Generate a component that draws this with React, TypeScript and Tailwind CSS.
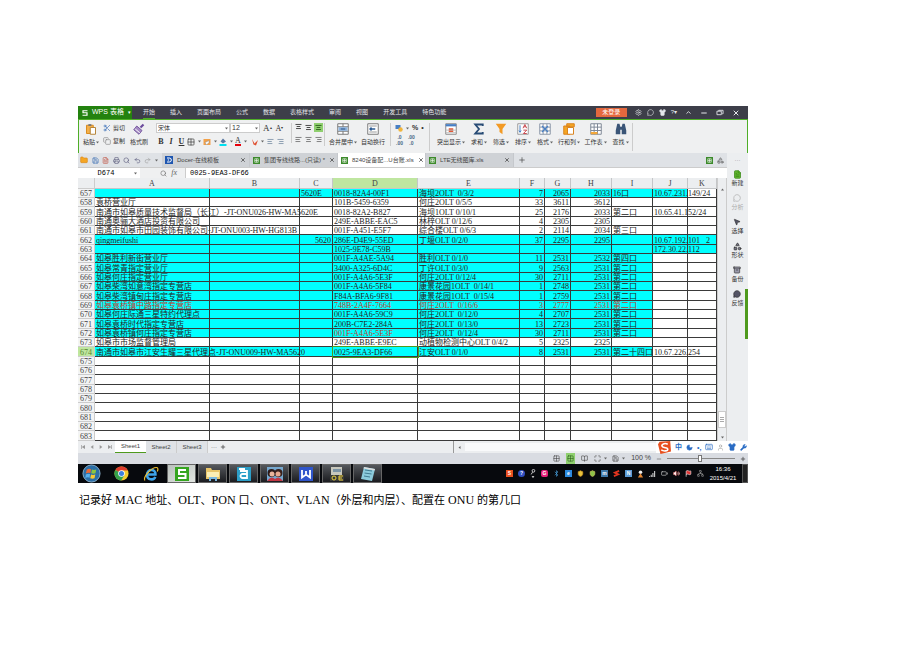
import type { ReactNode } from 'react'
import {
  AlignCenter, AlignLeft, AlignRight, Battery, Bluetooth, ChevronUp, Copy, FileText, Folder, Grid2x2, Minus,
  Plus, Printer, Redo2, Save, Scissors, Search, Settings, Shirt, Undo2, Wrench, X, Moon, Keyboard, User,
  BookOpen, Maximize, MessageCircle, Shapes, Archive, MousePointer2, Network, Volume2, Flag, Shield,
} from 'lucide-react'

type Row = {
  n: number
  fill?: number
  red?: 'row' | 'mac'
  cells: string[]
}

const columns = ['A', 'B', 'C', 'D', 'E', 'F', 'G', 'H', 'I', 'J', 'K']
const columnWidths = [
  'w-[115px]', 'w-[90px]', 'w-[33px]', 'w-[85px]', 'w-[102px]', 'w-[25px]', 'w-[26px]', 'w-[41px]', 'w-[41px]',
  'w-[35px]', '',
]

// fill = how many columns are cyan, counted from A
const rows: Row[] = [
  { n: 657, fill: 10, cells: ['', '', '5620E', '0018-82A4-00F1', '海坝2OLT  0/3/2', '7', '2065', '2033', '16口', '10.67.231.149/24'] },
  { n: 658, cells: ['袁桥营业厅', '', '', '101B-5459-6359', '何庄2OLT 0/5/5', '33', '3611', '3612'] },
  { n: 659, cells: ['南通市如皋质量技术监督局（长江）-JT-ONU026-HW-MA5620E', '', '', '0018-82A2-B827', '海坝1OLT 0/10/1', '25', '2176', '2033', '第二口', '10.65.41.152/24'] },
  { n: 660, cells: ['南通奥骊大酒店投资有限公司', '', '', '249E-ABBE-EAC5', '林梓OLT 0/12/6', '4', '2305', '2305'] },
  { n: 661, cells: ['南通市如皋市田园装饰有限公司-JT-ONU003-HW-HG813B', '', '', '001F-A451-E5F7', '综合楼OLT 0/6/3', '2', '2114', '2034', '第三口'] },
  { n: 662, fill: 11, cells: ['qingmeifushi', '', '5620', '286E-D4E9-55ED', '丁堰OLT 0/2/0', '37', '2295', '2295', '', '10.67.192.101   2'] },
  { n: 663, fill: 11, cells: ['', '', '', '1025-9E78-C59B', '', '', '', '', '', '172.30.22.112'] },
  { n: 664, fill: 9, cells: ['如皋胜利新街营业厅', '', '', '001F-A4AE-5A94', '胜利OLT 0/1/0', '11', '2531', '2532', '第四口'] },
  { n: 665, fill: 9, cells: ['如皋常青指定营业厅', '', '', '3400-A325-6D4C', '丁许OLT 0/3/0', '9', '2563', '2531', '第二口'] },
  { n: 666, fill: 9, cells: ['如皋何庄指定营业厅', '', '', '001F-A4A6-5E3F', '何庄2OLT 0/12/4', '30', '2711', '2531', '第二口'] },
  { n: 667, fill: 9, cells: ['如皋柴湾如意湾指定专营店', '', '', '001F-A4A6-5F84', '康景花园1OLT  0/14/1', '1', '2748', '2531', '第二口'] },
  { n: 668, fill: 9, cells: ['如皋柴湾镇甸庄指定专营店', '', '', 'F84A-BFA6-9F81', '康景花园1OLT  0/15/4', '1', '2759', '2531', '第二口'] },
  { n: 669, fill: 9, red: 'row', cells: ['如皋袁桥镇中路指定专营店', '', '', '748B-2A4F-7664', '何庄2OLT  0/16/6', '3', '2777', '2531', '第二口'] },
  { n: 670, fill: 9, cells: ['如皋何庄际通三星特约代理点', '', '', '001F-A4A6-59C9', '何庄2OLT  0/12/0', '4', '2707', '2531', '第二口'] },
  { n: 671, fill: 9, cells: ['如皋袁桥时代指定专营店', '', '', '200B-C7E2-284A', '何庄2OLT  0/13/0', '13', '2723', '2531', '第二口'] },
  { n: 672, fill: 9, red: 'mac', cells: ['如皋袁桥镇何庄指定专营店', '', '', '001F-A4A6-5E3F', '何庄2OLT  0/12/4', '30', '2711', '2531', '第二口'] },
  { n: 673, cells: ['如皋市市场监督管理局', '', '', '249E-ABBE-E9EC', '动植物检测中心OLT 0/4/2', '5', '2325', '2325'] },
  { n: 674, fill: 9, cells: ['南通市如皋市江安生耀三星代理点-JT-ONU009-HW-MA5620', '', '', '0025-9EA3-DF66', '江安OLT 0/1/0', '8', '2531', '2531', '第二十四口', '10.67.226.254'] },
  ...[675, 676, 677, 678, 679, 680, 681, 682, 683].map((n) => ({ n, cells: [] })),
]

// Latin runs and Chinese runs get their own size
function Mixed({ text, latin, cjk }: { text: string; latin: string; cjk: string }) {
  return (
    <>
      {text.split(/([\x20-\x7e]+)/).filter(Boolean).map((part, i) => (
        <span key={i} className={/^[\x20-\x7e]/.test(part) ? latin : cjk}>{part}</span>
      ))}
    </>
  )
}

function TitleBar() {
  const menus = ['开始', '插入', '页面布局', '公式', '数据', '表格样式', '审阅', '视图', '开发工具', '特色功能']
  return (
    <header className="flex h-[13px] items-stretch bg-[#3d3e49] text-[6px] text-gray-200">
      <button className="flex w-[54px] items-center gap-1 bg-[#23820f] pl-1 text-[7px] text-white">
        <svg viewBox="0 0 12 12" className="h-2 w-[6px]" fill="none" stroke="white" strokeWidth="2.4">
          <path d="M11 1.5H2v4h8v5H1" />
        </svg>
        <span className="whitespace-nowrap">WPS 表格</span>
        <span className="text-[5px]">▾</span>
      </button>
      <nav className="flex flex-1 items-center gap-[15px] pl-[11px]">
        {menus.map((m, i) => (
          <button key={m} className={i === 0 ? 'h-full whitespace-nowrap border-b border-[#4fae28]' : 'whitespace-nowrap'}>{m}</button>
        ))}
      </nav>
      <div className="flex items-center pr-2">
        <button className="mr-2 h-[9px] w-[31px] bg-[#e4683e] leading-[9px] text-white">未登录</button>
        <div className="mr-2 flex items-center gap-[5px]">
          <Settings size={7} />
          <MessageCircle size={7} />
          <Shirt size={7} fill="currentColor" />
          <span>?▾</span>
        </div>
        <div className="flex items-center gap-2">
          <ChevronUp size={7} strokeWidth={3} />
          <Minus size={8} strokeWidth={3} />
          <svg viewBox="0 0 8 8" className="h-[7px] w-2" fill="none" stroke="currentColor"><path d="M2.5 2.5v-1h5v4h-1M.5 2.5h5v4h-5z" /></svg>
          <X size={8} strokeWidth={3} />
        </div>
      </div>
    </header>
  )
}

function BigTool({ label, width, arrow, children }: { label: string; width: string; arrow?: boolean; children: ReactNode }) {
  return (
    <button className={`flex shrink-0 flex-col items-center ${width}`}>
      <svg viewBox="0 0 16 16" className="h-3 w-3" fill="none" strokeWidth="1.3">{children}</svg>
      <span className="mt-[3px] flex h-2 items-center gap-px whitespace-nowrap leading-[8px]">
        {label}
        {arrow && <Arrow />}
      </span>
    </button>
  )
}

function Arrow() {
  return <svg viewBox="0 0 6 6" className="h-[3px] w-[3px] shrink-0" fill="#666"><path d="M0 1h6L3 5z" /></svg>
}

function Ribbon() {
  return (
    <div className="flex h-[34px] items-start overflow-hidden border-x border-t border-[#4fae28] bg-[#eff0f1] pt-[3px] text-[6px] text-[#333]">
      <div className="flex w-[75px] shrink-0">
        <BigTool label="粘贴" width="w-[24px]" arrow>
          <path d="M2 3h9v11H2z" fill="#f4b04a" stroke="#d98a1c" />
          <path d="M4.500 1.500h4v2.500h-4z" fill="#777" />
          <path d="M7 6h7v9H7z" fill="#fff" stroke="#b58438" />
        </BigTool>
        <div className="flex w-[25px] flex-col gap-[5px] pt-px">
          <button className="flex h-2 items-center gap-[2px] whitespace-nowrap leading-[8px]"><Scissors size={8} color="#3c6fb8" />剪切</button>
          <button className="flex h-2 items-center gap-[2px] whitespace-nowrap leading-[8px]"><Copy size={8} color="#888" />复制</button>
        </div>
        <BigTool label="格式刷" width="w-[22px]">
          <path d="M9 5l4-4 2 2-4 4z" fill="#6b4a9c" />
          <path d="M5 4l7 6-4 5-7-6z" fill="#a68cc4" stroke="#75579d" />
          <path d="M3 8l6 5" stroke="#fff" />
        </BigTool>
      </div>

      <div className="w-[137px] shrink-0 px-[2px]">
        <div className="flex h-[10px] items-center">
          <select aria-label="字体" className="h-[10px] w-[74px] appearance-none border border-[#ccc] bg-white px-px text-[6px] leading-[8px]" defaultValue="宋体">
            <option>宋体</option>
          </select>
          <span className="-ml-[5px] mr-[2px]"><Arrow /></span>
          <select aria-label="字号" className="h-[10px] w-[30px] appearance-none border border-[#ccc] bg-white px-px text-[7px] leading-[8px]" defaultValue="12">
            <option>12</option>
          </select>
          <span className="-ml-[5px] mr-[5px]"><Arrow /></span>
          <button className="mr-[4px] font-['Liberation_Serif',serif] text-[9px] leading-[9px]">A<sup className="text-[4px]">▴</sup></button>
          <button className="font-['Liberation_Serif',serif] text-[8px] leading-[9px]">A<sup className="text-[4px]">▾</sup></button>
        </div>
        <div className="mt-1 flex h-[9px] items-center font-['Liberation_Serif',serif] text-[8px] leading-[9px]">
          <button className="w-[10px] font-bold">B</button>
          <button className="w-[10px] font-bold italic">I</button>
          <button className="w-[11px] font-bold underline">U</button>
          <button className="flex w-4 items-center gap-[3px]"><Grid2x2 size={8} strokeWidth={2} className="shrink-0" /><Arrow /></button>
          <button className="flex w-4 items-center gap-[3px]">
            <svg viewBox="0 0 16 16" className="h-2 w-2"><path d="M1 2h14v12H1z" fill="#f2a14a" /><path d="M4 9l8-4v4l-5 5z" fill="#fff" stroke="#888" /></svg>
            <Arrow />
          </button>
          <button className="flex w-4 items-center gap-[3px]">
            <svg viewBox="0 0 16 16" className="h-2 w-2"><path d="M8 1l6 6-6 4-5-4z" fill="#5877a0" /><path d="M1 12h14v4H1z" fill="#00dff0" /></svg>
            <Arrow />
          </button>
          <button className="flex w-4 items-center gap-[3px]"><span className="border-b-2 border-red-600 leading-[7px]">A</span><Arrow /></button>
          <button className="flex w-4 items-center gap-[2px]">
            <svg viewBox="0 0 16 16" className="h-2 w-2"><path d="M2 2l5 9 7-7-4 11-5-2z" fill="#df5132" /></svg>
            <Arrow />
          </button>
          <button className="mr-[3px]"><AlignLeft size={7} color="#4a6786" /></button>
          <button><AlignRight size={7} color="#4a6786" /></button>
        </div>
      </div>

      <div className="grid w-[33px] shrink-0 grid-cols-3 place-items-center gap-y-1 border-l border-[#ccc] px-px">
        <button className="flex h-[9px] w-[9px] items-start justify-center"><AlignCenter size={7} strokeWidth={3} /></button>
        <button className="flex h-[9px] w-[9px] items-center justify-center"><AlignCenter size={7} strokeWidth={3} /></button>
        <button className="flex h-[9px] w-[9px] items-center justify-center bg-[#8fcf6f]"><AlignCenter size={7} strokeWidth={3} color="#285b18" /></button>
        <button><AlignLeft size={7} /></button>
        <button><AlignCenter size={7} /></button>
        <button><AlignRight size={7} /></button>
      </div>

      <div className="flex w-[66px] shrink-0 justify-between border-l border-[#ccc] px-1">
        <BigTool label="合并居中" width="w-[28px]" arrow>
          <path d="M1 1h14v14H1zM1 5h14M1 11h14M8 1v4M8 11v4" stroke="#777" fill="#fff" />
          <path d="M2 5.500h12v5H2z" fill="#8fb4dc" /><path d="M5 8h6" stroke="#244d83" />
        </BigTool>
        <BigTool label="自动换行" width="w-[26px]">
          <path d="M1 1h14v14H1z" stroke="#777" fill="#fff" />
          <path d="M3 4h10M3 12h10" stroke="#999" /><path d="M4 8h7M6 6L4 8l2 2" stroke="#2c5b92" strokeWidth="1.800" />
        </BigTool>
      </div>

      <div className="w-[39px] shrink-0 border-l border-[#ccc] pl-1 text-[7px]">
        <div className="flex h-[10px] items-center gap-[3px]">
          <svg viewBox="0 0 16 16" className="h-2 w-2"><path d="M1 2h10v8H1z" fill="#477fc4" /><circle cx="11" cy="11" r="4.500" fill="#f1b53c" /></svg>
          <Arrow />
          <span className="font-bold">%</span>
          <span className="font-bold">•</span>
        </div>
        <div className="mt-px flex gap-[5px] pl-px text-[5px] font-bold leading-[6px] text-[#4a6786]">
          <button className="flex flex-col"><span>.0</span><span>.00</span></button>
          <button className="flex flex-col"><span>.00</span><span>.0</span></button>
        </div>
      </div>

      <div className="flex border-l border-[#ccc] pl-[4px]">
        <BigTool label="突出显示" width="w-[34px]" arrow>
          <path d="M1 1h14v14H1z" fill="#fff" stroke="#888" /><path d="M1 3h14" stroke="#477fc4" strokeWidth="3" />
          <path d="M5 7h6v5H5z" fill="#e15836" /><path d="M1 9.500h14M1 13h14" stroke="#bbb" />
        </BigTool>
        <BigTool label="求和" width="w-[22px]" arrow>
          <path d="M13 4V2H3l5 6-5 6h10v-2" stroke="#274b75" strokeWidth="2.400" />
        </BigTool>
        <BigTool label="筛选" width="w-[22px]" arrow>
          <path d="M1 1h14l-5 7v7l-4-3V8z" fill="#f29a25" />
        </BigTool>
        <BigTool label="排序" width="w-[22px]" arrow>
          <path d="M1 1h14v14H1z" stroke="#999" fill="#fff" /><path d="M4 3v9M2.500 10L4 12.500 5.500 10" stroke="#477fc4" />
          <path d="M8 7l2.500-5L13 7M9 5h3M8.500 9.500H13L8.500 14H13" stroke="#c9484e" />
        </BigTool>
        <BigTool label="格式" width="w-[22px]" arrow>
          <path d="M1 1h14v14H1zM1 5.500h14M1 10.500h14M5.500 1v14M10.500 1v14" stroke="#8a96a8" fill="#fff" />
          <path d="M4 4l8 8M12 4l-8 8" stroke="#477fc4" strokeWidth="1.600" />
        </BigTool>
        <BigTool label="行和列" width="w-[26px]" arrow>
          <path d="M1 4h8v11H1zM5 1h10v4H5z" fill="#f5a623" stroke="#d9831c" /><path d="M6 6h8v9H6z" fill="#fff" stroke="#d9831c" />
        </BigTool>
        <BigTool label="工作表" width="w-[27px]" arrow>
          <path d="M1 1h14v14H1zM1 5.500h14M1 10h14M5.500 1v14M10 1v14" stroke="#7d8795" fill="#fff" />
          <path d="M1 12h9v3H1z" fill="#f4a83a" />
        </BigTool>
        <BigTool label="查找" width="w-[23px]" arrow>
          <path d="M3 1h3l1 4h2l1-4h3l2 9v5H9V9H7v6H1v-5z" fill="#3a5577" />
        </BigTool>
        <span className="h-[28px] w-px bg-[#ccc]" />
      </div>
    </div>
  )
}

function SheetIcon() {
  return (
    <svg viewBox="0 0 12 12" className="h-[7px] w-[7px] shrink-0">
      <path d="M0 0h12v12H0z" fill="#3c8a2b" /><path d="M3 3h6v6H3zM6 3v6M3 6h6" fill="none" stroke="#fff" />
    </svg>
  )
}

function FileTabs() {
  const tabs = ['Docer-在线模板', '集团专线线路...(只读) *', '8240设备配...U台账.xls', 'LTE无线图库.xls']
  return (
    <div className="flex h-[14px] items-stretch bg-[#dfe2e6] text-[6px] text-[#444]">
      <div className="flex w-[84px] shrink-0 items-center justify-between pl-[2px] pr-1">
        <Folder size={8} fill="#f5a623" color="#d98a1c" />
        <Save size={7} color="#2f66b0" />
        <FileText size={7} color="#c04b3a" />
        <Printer size={7} color="#557" />
        <Search size={7} color="#557" />
        <Undo2 size={7} color="#557" />
        <Redo2 size={7} color="#999" />
        <Arrow />
      </div>
      {tabs.map((t, i) => (
        <div key={t} className={`flex w-[88px] shrink-0 items-center gap-1 border-r border-[#c5c8cc] px-[3px] ${i === 2 ? 'bg-white' : 'bg-[#cfd2d6]'}`}>
          {i === 0 ? (
            <svg viewBox="0 0 12 12" className="h-2 w-2 shrink-0"><path d="M0 0h12v12H0z" fill="#1e56b0" /><path d="M3 3h3.500a3 3 0 010 6H3M5 5v2" fill="none" stroke="#fff" strokeWidth="1.500" /></svg>
          ) : <SheetIcon />}
          <button className="flex-1 whitespace-nowrap text-left">{t}</button>
          <button aria-label="关闭"><X size={6} strokeWidth={3} /></button>
        </div>
      ))}
      <button aria-label="新建标签" className="ml-1"><Plus size={8} /></button>
      <div className="ml-auto flex items-center gap-1 pr-[3px]">
        <SheetIcon />
        <Shapes size={7} />
      </div>
    </div>
  )
}

function FormulaBar() {
  return (
    <div className="flex h-[11px] items-stretch border-t border-[#ccc] bg-[#eff0f1] font-['Liberation_Mono','Noto_Sans_CJK_SC',monospace] text-[7px]">
      <input aria-label="名称框" defaultValue="D674" className="w-[56px] bg-white text-center" />
      <span className="flex w-[6px] items-center bg-white"><Arrow /></span>
      <div className="flex w-[46px] items-center justify-end gap-1 border-r border-[#ccc] pr-2 text-[#666]">
        <Search size={7} />
        <span className="font-['Liberation_Serif',serif] text-[8px] italic">fx</span>
      </div>
      <input aria-label="编辑栏" defaultValue="0025-9EA3-DF66" className="min-w-0 flex-1 bg-white pl-1" />
    </div>
  )
}

function Grid() {
  return (
    <table className="w-full table-fixed border-separate border-spacing-0 bg-white font-['Liberation_Serif','Noto_Sans_CJK_SC',serif] text-[8px] leading-[7px] text-[#222]">
      <thead>
        <tr className="h-[11px] bg-[#eceef0] text-[#444]">
          <th className="w-[17px] border-b border-r border-[#ccc] p-0" />
          {columns.map((c, i) => (
            <th key={c} className={`border-b border-r border-[#c4c6c8] p-0 font-normal ${columnWidths[i]} ${c === 'D' ? 'bg-[#bfe6a0]' : ''}`}>{c}</th>
          ))}
        </tr>
      </thead>
      <tbody>
        {rows.map((row) => (
          <tr key={row.n} className={row.n % 3 === 2 ? 'h-[10px]' : 'h-[9px]'}>
            <th className={`border-b border-r border-[#ccc] p-0 pt-px text-center font-normal ${row.n === 674 ? 'bg-[#bfe6a0] text-[#5a8a30]' : 'bg-[#f3f4f5] text-[#444]'}`}>
              {row.n}
            </th>
            {columns.map((c, i) => {
              const text = row.cells[i] ?? ''
              const right = (i >= 5 && i <= 7) || text === '5620'
              const red = row.red === 'row' || (row.red === 'mac' && i === 3)
              const active = row.n === 674 && i === 3
              return (
                <td
                  key={c}
                  className={`whitespace-pre border-b border-r border-[#3a3a3a] px-px pb-0 pt-px ${right ? 'text-right' : 'text-left'} ${i < (row.fill ?? 0) ? 'bg-[#00ffff]' : ''} ${red ? 'text-[#c0392b]' : ''} ${active ? 'outline outline-[#4f9a1e]' : ''}`}
                >
                  {text}
                </td>
              )
            })}
          </tr>
        ))}
      </tbody>
    </table>
  )
}

function VerticalScroll() {
  return (
    <div className="flex w-[10px] shrink-0 flex-col items-center justify-between border-x border-[#ccc] bg-[#eceef0] py-[2px]">
      <button aria-label="上" className="mt-[8px] rotate-180"><Arrow /></button>
      <div className="mt-auto mb-2 flex h-[17px] w-2 flex-col items-center justify-center gap-px border border-[#ccc] bg-white">
        <span className="h-px w-1 bg-[#aaa]" />
        <span className="h-px w-1 bg-[#aaa]" />
        <span className="h-px w-1 bg-[#aaa]" />
      </div>
      <button aria-label="下"><Arrow /></button>
    </div>
  )
}

function SidePanel() {
  const items = [
    { label: '新建', icon: <FileText size={9} fill="#62b52f" color="#3b8a18" /> },
    { label: '分析', icon: <MessageCircle size={8} />, off: true },
    { label: '选择', icon: <MousePointer2 size={8} fill="#556" /> },
    { label: '形状', icon: <Shapes size={9} fill="#778" /> },
    { label: '备份', icon: <Archive size={8} fill="#99a" /> },
    { label: '反馈', icon: <MessageCircle size={8} fill="#556" /> },
  ]
  return (
    <aside className="relative flex w-[21px] shrink-0 flex-col items-center bg-[#eceef0] text-[6px] text-[#333]">
      <div className="h-[16px] leading-[14px] text-[#888]">···</div>
      {items.map((it) => (
        <button key={it.label} className={`flex h-6 flex-col items-center ${it.off ? 'text-[#aaa]' : ''}`}>
          <span className="flex h-[10px] items-center">{it.icon}</span>
          <span className="leading-[9px]">{it.label}</span>
        </button>
      ))}
      <span className="absolute right-0 top-[136px] h-[50px] w-[3px] bg-[#4f9a1e]" />
    </aside>
  )
}

function SogouBar() {
  return (
    <div className="absolute top-0 right-0 flex h-3 w-[92px] items-center gap-1 bg-white pl-[2px] text-[#2a6cc4]">
      <svg viewBox="0 0 16 16" className="h-[13px] w-[13px] shrink-0">
        <path d="M2 1l13-1 1 13-13 3L0 4z" fill="#e8501f" />
        <path d="M12 4C8 2 4 4 5 6.500s7 1 7 3.500-5 3-8 1" fill="none" stroke="#fff" strokeWidth="2" />
      </svg>
      <span className="text-[7px] font-bold">中</span>
      <Moon size={7} fill="currentColor" />
      <span className="text-[7px] font-bold leading-[7px]">•,</span>
      <Keyboard size={8} />
      <User size={7} color="#999" />
      <Shirt size={8} fill="currentColor" />
      <Wrench size={7} fill="currentColor" />
    </div>
  )
}

function SheetBar() {
  return (
    <div className="relative flex h-3 items-center bg-[#eceef0] text-[6px] text-[#444]">
      <div className="flex w-[37px] items-center gap-[5px] pl-[3px] text-[#999]">
        <svg viewBox="0 0 6 6" className="h-1 w-1" fill="currentColor"><path d="M0 0h1v6H0zM6 0v6L1 3z" /></svg>
        <svg viewBox="0 0 6 6" className="h-1 w-1" fill="currentColor"><path d="M5 0v6L1 3z" /></svg>
        <svg viewBox="0 0 6 6" className="h-1 w-1" fill="currentColor"><path d="M1 0v6l4-3z" /></svg>
        <svg viewBox="0 0 6 6" className="h-1 w-1" fill="currentColor"><path d="M5 0h1v6H5zM0 0v6l5-3z" /></svg>
      </div>
      <button className="h-full w-[31px] border-b border-[#4f9a1e] bg-white">Sheet1</button>
      <button className="h-full w-[31px] border-r border-[#ccc] bg-[#dfe2e6]">Sheet2</button>
      <button className="h-full w-[31px] border-r border-[#ccc] bg-[#dfe2e6]">Sheet3</button>
      <span className="px-[3px]">···</span>
      <Plus size={6} strokeWidth={3} />
      <span className="ml-auto h-full w-px bg-[#999]" />
      <span className="mx-1 rotate-90"><Arrow /></span>
      <div className="mr-[65px] h-2 w-[218px] bg-[#f9fafb]" />
      <SogouBar />
    </div>
  )
}

function StatusBar() {
  return (
    <div className="flex h-[11px] items-center justify-end gap-[5px] bg-[#d9dce2] pr-[2px] text-[6px] text-[#444]">
      <button className="px-px"><Grid2x2 size={7} /></button>
      <button className="bg-[#8fcf6f] px-px py-[2px]"><Grid2x2 size={7} color="#285b18" /></button>
      <button className="px-px"><BookOpen size={7} /></button>
      <button className="flex items-center gap-[3px]"><Maximize size={7} /><Arrow /></button>
      <button className="flex items-center gap-[3px]"><Save size={7} /><Arrow /></button>
      <span className="whitespace-nowrap pl-px text-[7px]">100 %</span>
      <Minus size={6} />
      <input
        type="range"
        aria-label="缩放"
        defaultValue={48}
        className="h-[9px] w-[68px] appearance-none bg-[linear-gradient(#888,#888)] bg-[length:100%_1px] bg-center bg-no-repeat [&::-webkit-slider-thumb]:h-[7px] [&::-webkit-slider-thumb]:w-[4px] [&::-webkit-slider-thumb]:appearance-none [&::-webkit-slider-thumb]:border [&::-webkit-slider-thumb]:border-[#777] [&::-webkit-slider-thumb]:bg-white"
      />
      <Plus size={6} strokeWidth={3} />
    </div>
  )
}

function TaskButton({ label, lit, children }: { label: string; lit?: boolean; children: ReactNode }) {
  return (
    <button aria-label={label} className={`flex h-full w-[29px] shrink-0 items-center justify-center border border-[#666] ${lit ? 'bg-linear-to-br from-[#b9c0bc] to-[#e2e6e2]' : 'bg-linear-to-b from-[#55585d] to-[#1b1c20]'}`}>
      <svg viewBox="0 0 16 16" className="h-4 w-4">{children}</svg>
    </button>
  )
}

function Tray() {
  const box = 'flex h-[7px] w-[7px] items-center justify-center'
  return (
    <div className="flex items-center gap-[5px] text-[5px] font-bold text-white">
      <span className={`${box} bg-[#e8501f]`}>S</span>
      <span className={`${box} rounded-full bg-[#2f4fc0]`}>?</span>
      <svg viewBox="0 0 6 10" className="h-[9px] w-[6px]" fill="none" stroke="#ddd"><circle cx="3.500" cy="2" r="1.500" /><path d="M2.500 3.500L1 6" /><path d="M1.500 8h3L3 10z" fill="#fff" stroke="none" /></svg>
      <span className={`${box} rounded-[2px] bg-[#e8207a]`}>G</span>
      <Bluetooth size={7} color="#4aa8ea" />
      <span className={`${box} bg-[#2c8ae0]`}>e</span>
      <Shield size={7} fill="#e8c33c" color="#c58a1c" />
      <Shield size={7} fill="#8fc44a" color="#e0d060" />
      <span className={`${box} bg-[#3f78a8]`}>m</span>
      <svg viewBox="0 0 8 8" className="h-[7px] w-[7px]" fill="none" stroke="#e0341f" strokeWidth="2"><path d="M7 1L2 3l4 2-5 2" /></svg>
      <span className={`${box} bg-[#5b9bd5]`}>N</span>
      <svg viewBox="0 0 8 8" className="h-2 w-[7px]"><circle cx="4" cy="2" r="2" fill="#eee" /><path d="M1 8l3-5 3 5z" fill="#e28430" /></svg>
      <svg viewBox="0 0 8 8" className="h-[7px] w-[7px]" fill="#fff"><path d="M0 7h1v1H0zM2 5.500h1V8H2zM4 3.500h1V8H4zM6 1h1v7H6z" /></svg>
      <Battery size={7} color="#ddd" />
      <Volume2 size={7} color="#e66" fill="#fff" />
      <Flag size={7} color="#fff" fill="#d33" />
      <Network size={7} color="#999" />
    </div>
  )
}

function TaskBar() {
  return (
    <footer className="flex h-[19px] items-center bg-[#07090d]">
      <button aria-label="开始菜单" className="ml-[4px] mr-[13px] shrink-0">
        <svg viewBox="0 0 20 20" className="h-[19px] w-[19px]">
          <circle cx="10" cy="10" r="9" fill="#2b6ea6" stroke="#8fb4d0" />
          <path d="M5 6q2-1.500 4.500-.5l-.7 4Q6.500 8.700 4 10z" fill="#ee6a35" /><path d="M10.500 5.800q2 1 4.500 0l-.8 4q-2 1-4.500 0z" fill="#8cc63f" />
          <path d="M4 11q2-1.300 4.500-.5L8 14.500q-2-1-4.500.3z" fill="#58b0ec" /><path d="M9.500 11q2 1 4.500 0l-.8 4q-2 1-4.500 0z" fill="#f9c930" />
        </svg>
      </button>
      <button aria-label="Chrome" className="mr-[14px] shrink-0">
        <svg viewBox="0 0 16 16" className="h-[15px] w-[15px]">
          <circle cx="8" cy="8" r="7.500" fill="#f6cb2e" />
          <path d="M8 8L1.500 4.200A7.500 7.500 0 0114.700 4.700H8z" fill="#dd3c2e" />
          <path d="M1.500 4.200A7.500 7.500 0 007.600 15.500L11 9.800 8 8z" fill="#35a04b" />
          <circle cx="8" cy="8" r="3.500" fill="#fff" /><circle cx="8" cy="8" r="2.700" fill="#3f7fdd" />
        </svg>
      </button>
      <button aria-label="Internet Explorer" className="mr-2 shrink-0">
        <svg viewBox="0 0 16 16" className="h-4 w-4" fill="none">
          <path d="M4 8.500h8.500C13 2.500 4 2.500 4 8.500s7 6 8.300 2.300" stroke="#3fa4ea" strokeWidth="2.500" />
          <path d="M2 14.500C-1 12 8 1.500 13.500 1.500c2 0 1.500 2.500.8 4" stroke="#f2c230" strokeWidth="1.200" />
        </svg>
      </button>
      <div className="flex h-full gap-[2px]">
        <TaskButton label="WPS 表格" lit>
          <path d="M1 1h14v14H1z" fill="#35a51f" /><path d="M12 4H5v4h6.500v4H4" fill="none" stroke="#fff" strokeWidth="2" />
        </TaskButton>
        <TaskButton label="资源管理器">
          <path d="M1 2h5l1 2h8v9H1z" fill="#e8c56a" /><path d="M2 6h12v5H2z" fill="#fbeeb5" /><path d="M4 11h8v4h-2v-2H6v2H4z" fill="#7cb8e0" />
        </TaskButton>
        <TaskButton label="阿里">
          <path d="M1 1h14v14H1z" fill="#2d9fc8" /><path d="M4 5h7v7H6.500a2 2 0 010-4H11M3 3h6" fill="none" stroke="#fff" strokeWidth="1.800" />
        </TaskButton>
        <TaskButton label="照片">
          <path d="M0 1h16v14H0z" fill="#76a8cf" /><circle cx="4.500" cy="7" r="4" fill="#2b1a19" /><circle cx="11.500" cy="7" r="4" fill="#37201c" />
          <circle cx="5" cy="8" r="2.500" fill="#eab59c" /><circle cx="11" cy="8" r="2.500" fill="#e7aa90" /><path d="M0 15q4-6 8-2 4-4 8 2z" fill="#c03642" />
        </TaskButton>
        <TaskButton label="WPS 文字">
          <path d="M1 1h14v14H1z" fill="#2f55cb" /><path d="M4 4v7.500l4-3 4 3V4M8 5v4" fill="none" stroke="#fff" strokeWidth="1.800" />
        </TaskButton>
        <TaskButton label="工具">
          <path d="M2 1h11v12H2z" fill="#c8c8bd" /><path d="M4 3h8v3H4z" fill="#7c94a5" /><path d="M1 9h14v6H1z" fill="#3c3c38" />
          <circle cx="5" cy="12" r="2" fill="none" stroke="#e8d040" /><path d="M14 10h-4v4h4M10 12h3" stroke="#f0d23a" fill="none" />
        </TaskButton>
        <TaskButton label="记事本">
          <path d="M4 1l11 2-3 12-11-2z" fill="#8ccbdc" /><path d="M5 4l7 1M4.500 7l7 1M4 10l6 1" stroke="#417c91" /><path d="M4 1l11 2-.5 1.500-11-2z" fill="#ddd" />
        </TaskButton>
      </div>
      <div className="ml-auto flex h-full items-center">
        <Tray />
        <div className="flex w-[38px] flex-col items-center text-[6px] leading-[9px] text-white">
          <span>16:36</span>
          <span>2015/4/21</span>
        </div>
        <span className="h-full w-[6px] border border-[#555] bg-[#222]" />
      </div>
    </footer>
  )
}

export default function App() {
  return (
    <div className="min-h-screen bg-white pb-8 pl-[78px] pr-[172px] pt-[106px] font-['Liberation_Sans','Noto_Sans_CJK_SC',sans-serif]">
      <main>
        <TitleBar />
        <Ribbon />
        <div className="flex items-stretch">
          <div className="min-w-0 flex-1">
            <FileTabs />
            <FormulaBar />
            <div className="flex items-stretch">
              <div className="min-w-0 flex-1">
                <Grid />
              </div>
              <VerticalScroll />
            </div>
          </div>
          <SidePanel />
        </div>
        <SheetBar />
        <StatusBar />
        <TaskBar />
      </main>
      <p className="mt-2 whitespace-nowrap pl-px font-['Liberation_Serif','Noto_Sans_CJK_SC',serif] leading-4 text-black">
        <Mixed text="记录好 MAC 地址、OLT、PON 口、ONT、VLAN（外层和内层）、配置在 ONU 的第几口" latin="text-[12px]" cjk="text-[11px]" />
      </p>
    </div>
  )
}
